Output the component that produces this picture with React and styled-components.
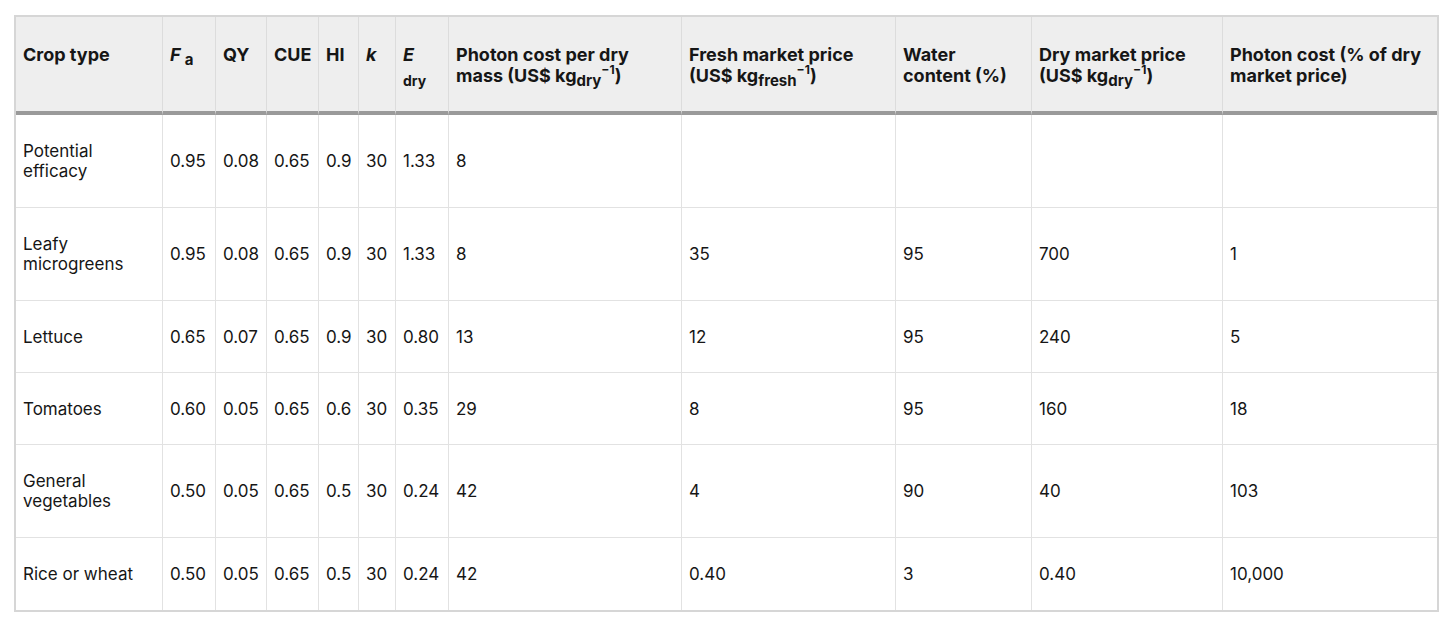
import React from "react";
import styled, { createGlobalStyle } from "styled-components";

const Global = createGlobalStyle`
  html, body { margin: 0; padding: 0; background: #ffffff; }
  body { font-family: Inter, "Noto Sans", "Liberation Sans", sans-serif; color: #161616; }
`;

const Page = styled.div`
  padding: 15px 17px 0 14px;
`;

const Table = styled.table`
  width: 1425px;
  table-layout: fixed;
  border-collapse: separate;
  border-spacing: 0;
  border: 2px solid #d6d6d6;
  font-size: 17px;
  line-height: 20px;
`;

const HeadRow = styled.tr`
  height: 98px;
`;

const Th = styled.th`
  box-sizing: border-box;
  background: #eeeeee;
  text-align: left;
  vertical-align: top;
  font-weight: 700;
  font-size: 18px;
  padding: 27px 8px 0 7px;
  line-height: 21px;
  border-right: 1px solid #dcdcdc;
  border-bottom: 4px solid #9a9a9a;
  &:last-child { border-right: none; }
`;

const Td = styled.td`
  box-sizing: border-box;
  vertical-align: middle;
  text-align: left;
  font-weight: 400;
  padding: 25px 8px 25px 7px;
  border-right: 1px solid #e2e2e2;
  border-bottom: 1px solid #e2e2e2;
  &:last-child { border-right: none; }
  tr:last-child > & { border-bottom: none; }
`;

const FirstCell = styled(Td)`
  padding-right: 20px;
`;

const Row = styled.tr`
  height: ${(p) => (p.$double ? 93 : 72)}px;
`;

const Sym = styled.i`
  font-style: italic;
  font-weight: 700;
`;

const Sub = styled.sub`
  font-size: 15px;
  line-height: 0;
  vertical-align: -4px;
`;

const Sup = styled.sup`
  font-size: 12px;
  line-height: 0;
  vertical-align: 8px;
`;

const SubBlock = styled.span`
  display: block;
  font-size: 14px;
  line-height: 16px;
  padding-top: 8px;
`;

const widths = [147, 53, 51, 52, 40, 37, 53, 233, 214, 136, 191, 214];

const rows = [
  { d: true, c: ["Potential efficacy", "0.95", "0.08", "0.65", "0.9", "30", "1.33", "8", "", "", "", ""] },
  { d: true, c: ["Leafy microgreens", "0.95", "0.08", "0.65", "0.9", "30", "1.33", "8", "35", "95", "700", "1"] },
  { d: false, c: ["Lettuce", "0.65", "0.07", "0.65", "0.9", "30", "0.80", "13", "12", "95", "240", "5"] },
  { d: false, c: ["Tomatoes", "0.60", "0.05", "0.65", "0.6", "30", "0.35", "29", "8", "95", "160", "18"] },
  { d: true, c: ["General vegetables", "0.50", "0.05", "0.65", "0.5", "30", "0.24", "42", "4", "90", "40", "103"] },
  { d: false, c: ["Rice or wheat", "0.50", "0.05", "0.65", "0.5", "30", "0.24", "42", "0.40", "3", "0.40", "10,000"] },
];

export default function App() {
  return (
    <Page>
      <Global />
      <Table>
        <colgroup>
          {widths.map((w, i) => (
            <col key={i} style={{ width: w }} />
          ))}
        </colgroup>
        <thead>
          <HeadRow>
            <Th>Crop type</Th>
            <Th>
              <Sym>F</Sym> <Sub>a</Sub>
            </Th>
            <Th>QY</Th>
            <Th>CUE</Th>
            <Th>HI</Th>
            <Th>
              <Sym>k</Sym>
            </Th>
            <Th>
              <Sym>E</Sym>
              <SubBlock>dry</SubBlock>
            </Th>
            <Th>
              Photon cost per dry mass (US$ kg<Sub>dry</Sub>
              <Sup>−1</Sup>)
            </Th>
            <Th>
              Fresh market price (US$ kg<Sub>fresh</Sub>
              <Sup>−1</Sup>)
            </Th>
            <Th>Water content (%)</Th>
            <Th>
              Dry market price (US$ kg<Sub>dry</Sub>
              <Sup>−1</Sup>)
            </Th>
            <Th>Photon cost (% of dry market price)</Th>
          </HeadRow>
        </thead>
        <tbody>
          {rows.map((r, i) => (
            <Row key={i} $double={r.d}>
              {r.c.map((c, j) =>
                j === 0 ? <FirstCell key={j}>{c}</FirstCell> : <Td key={j}>{c}</Td>
              )}
            </Row>
          ))}
        </tbody>
      </Table>
    </Page>
  );
}
